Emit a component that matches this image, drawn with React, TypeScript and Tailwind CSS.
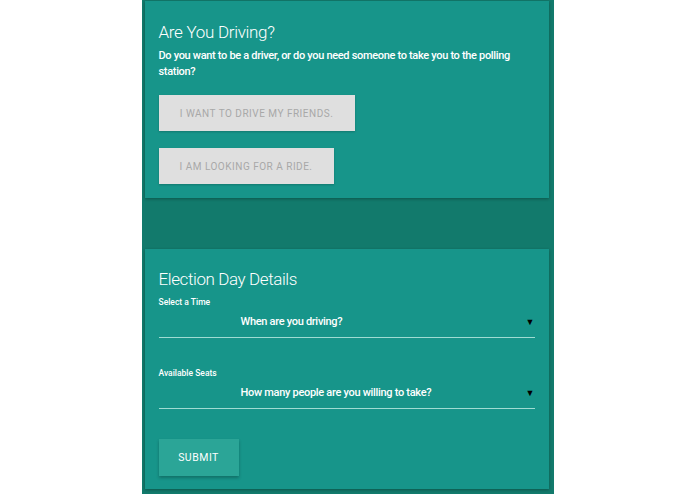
import React from "react";

const font = { fontFamily: "Roboto, 'Liberation Sans', sans-serif" };

function SelectRow({ label, placeholder, top }: { label: string; placeholder: string; top: string }) {
  return (
    <div className={top}>
      <div className="text-[8.5px] leading-[12px] font-medium text-white">{label}</div>
      <div className="flex items-center justify-between pl-[82px] pt-[6px] pb-[7px] border-b border-[#9fdcd3] mr-[14px]">
        <span className="text-[11px] leading-[16px] font-medium tracking-[-0.3px] text-white">{placeholder}</span>
        <span className="text-[9px] leading-[16px] text-black">▼</span>
      </div>
    </div>
  );
}

export default function App() {
  return (
    <div className="w-full h-[494px] bg-white flex justify-center" style={font}>
      <div className="w-[412px] h-full bg-[#127a6c] pl-[3px] pr-[5px] pt-[1px] flex flex-col">
        <div className="h-[197px] bg-[#17958a] shadow-[0_1px_3px_rgba(0,0,0,0.3)] pl-[14px] pt-[19px]">
          <h1 className="text-[17px] leading-[24px] font-light tracking-[-0.3px] text-white">Are You Driving?</h1>
          <p className="mt-[4px] text-[11px] leading-[16px] font-medium tracking-[-0.32px] text-white pr-[20px]">
            Do you want to be a driver, or do you need someone to take you to the polling station?
          </p>
          <div className="mt-[15px] flex flex-col items-start gap-[17px]">
            <button className="h-[36px] w-[196px] bg-[#dfdfdf] text-[10px] tracking-[0.5px] text-[#a8a8a8] shadow-[0_1px_2px_rgba(0,0,0,0.2)]">
              I WANT TO DRIVE MY FRIENDS.
            </button>
            <button className="h-[36px] w-[175px] bg-[#dfdfdf] text-[10px] tracking-[0.5px] text-[#a8a8a8] shadow-[0_1px_2px_rgba(0,0,0,0.2)]">
              I AM LOOKING FOR A RIDE.
            </button>
          </div>
        </div>
        <div className="h-[51px]" />
        <div className="h-[240px] bg-[#17958a] shadow-[0_1px_3px_rgba(0,0,0,0.3)] pl-[14px] pt-[18px]">
          <h2 className="text-[17px] leading-[24px] font-light tracking-[-0.4px] text-white">Election Day Details</h2>
          <SelectRow top="mt-[5px]" label="Select a Time" placeholder="When are you driving?" />
          <SelectRow top="mt-[29px]" label="Available Seats" placeholder="How many people are you willing to take?" />
          <button className="mt-[30px] h-[37px] w-[80px] bg-[#2ba597] text-[10.5px] tracking-[0.5px] text-white shadow-[0_2px_3px_rgba(0,0,0,0.25)]">
            SUBMIT
          </button>
        </div>
      </div>
    </div>
  );
}
